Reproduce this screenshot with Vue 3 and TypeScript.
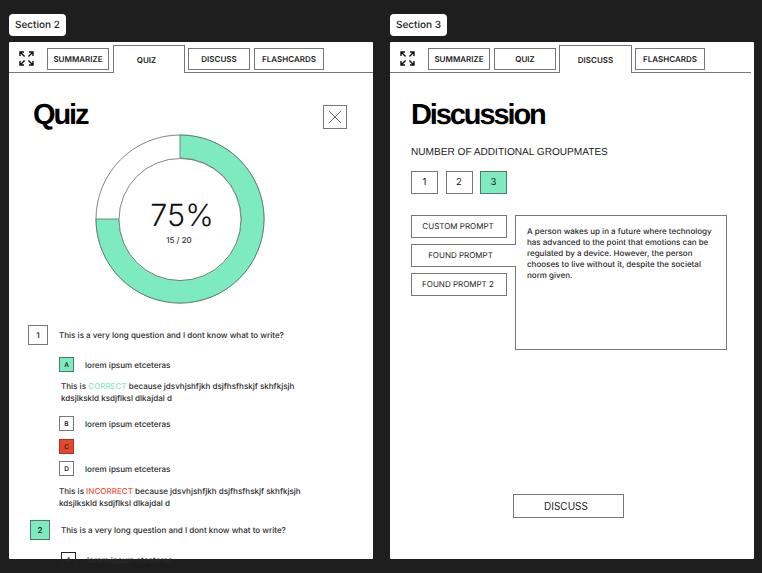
<script setup lang="ts">
const tabs = ['SUMMARIZE', 'QUIZ', 'DISCUSS', 'FLASHCARDS']
const sections = [
  { name: 'Section 2', active: 'QUIZ' },
  { name: 'Section 3', active: 'DISCUSS' },
]
const prompts = ['CUSTOM PROMPT', 'FOUND PROMPT', 'FOUND PROMPT 2']
</script>

<template>
  <div class="page">
    <section v-for="s in sections" :key="s.name" class="col">
      <div class="label">{{ s.name }}</div>
      <div class="panel">
        <header class="tabbar" :class="{ short: s.active === 'DISCUSS' }">
          <svg class="expand" width="15" height="15" viewBox="0 0 15 15" fill="none" stroke="#111" stroke-width="1.4">
            <path d="M1 5V1h4M1 1l4.6 4.6M10 1h4v4M14 1 9.4 5.6M1 10v4h4M1 14l4.6-4.6M14 10v4h-4M14 14 9.4 9.4" />
          </svg>
          <div v-for="t in tabs" :key="t" class="tab" :class="['tab-' + t.toLowerCase(), { active: t === s.active }]">{{ t }}</div>
        </header>

        <div v-if="s.active === 'QUIZ'" class="quiz-body">
          <div class="quiz-head">
            <h1 class="title">Quiz</h1>
            <button class="close" aria-label="Close">
              <svg width="14" height="14" viewBox="0 0 14 14" stroke="#444" stroke-width="0.8"><path d="M1 1l12 12M13 1 1 13" /></svg>
            </button>
          </div>
          <div class="donut">
            <svg width="170" height="170" viewBox="0 0 170 170">
              <circle cx="85" cy="85" r="84" fill="#fff" stroke="#666" stroke-width="0.8" />
              <path d="M85 1A84 84 0 1 1 1 85H24A61 61 0 1 0 85 24Z" fill="#7eeabf" stroke="#4f7a68" stroke-width="0.8" />
              <circle cx="85" cy="85.5" r="61" fill="#fff" stroke="#666" stroke-width="0.8" />
            </svg>
            <div class="score">
              <div class="pct">75%</div>
              <div class="frac">15 / 20</div>
            </div>
          </div>

          <div class="qrow first">
            <div class="qnum">1</div>
            <div>This is a very long question and I dont know what to write?</div>
          </div>
          <div class="opt a1"><span class="key green">A</span><span>lorem ipsum etceteras</span></div>
          <p class="why shift">This is <span class="ok">CORRECT</span> because jdsvhjshfjkh dsjfhsfhskjf skhfkjsjh<br />kdsjlkskld ksdjflksl dlkajdal d</p>
          <div class="opt b1"><span class="key">B</span><span>lorem ipsum etceteras</span></div>
          <div class="opt c1"><span class="key red">C</span></div>
          <div class="opt d1"><span class="key">D</span><span>lorem ipsum etceteras</span></div>
          <p class="why late">This is <span class="bad">INCORRECT</span> because jdsvhjshfjkh dsjfhsfhskjf skhfkjsjh<br />kdsjlkskld ksdjflksl dlkajdal d</p>
          <div class="qrow second">
            <div class="qnum green">2</div>
            <div>This is a very long question and I dont know what to write?</div>
          </div>
          <div class="opt a2"><span class="key">A</span><span>lorem ipsum etceteras</span></div>
        </div>

        <div v-else class="disc">
          <h1 class="title">Discussion</h1>
          <h2 class="sub">NUMBER OF ADDITIONAL GROUPMATES</h2>
          <div class="nums">
            <div class="num">1</div>
            <div class="num">2</div>
            <div class="num on">3</div>
          </div>
          <div class="prompt-area">
            <div class="prompts">
              <div v-for="(p, i) in prompts" :key="p" class="prompt" :class="{ sel: i === 1 }">{{ p }}</div>
            </div>
            <div class="prompt-box">A person wakes up in a future where technology has advanced to the point that emotions can be regulated by a device. However, the person chooses to live without it, despite the societal norm given.</div>
          </div>
          <button class="discuss-btn">DISCUSS</button>
        </div>
      </div>
    </section>
  </div>
</template>

<style>
html, body { margin: 0; background: #1e1e1e; }
</style>

<style scoped>
.page {
  display: flex;
  gap: 17px;
  width: 762px;
  height: 573px;
  box-sizing: border-box;
  padding: 14px 0 0 9px;
  overflow: hidden;
  background: #1e1e1e;
  font-family: Inter, "Liberation Sans", sans-serif;
  color: #222;
  text-rendering: geometricPrecision;
}
.col { width: 364px; display: flex; flex-direction: column; align-items: flex-start; gap: 6px; }
.label {
  height: 22px;
  line-height: 22px;
  padding: 0 6px;
  background: #fff;
  border-radius: 4px;
  font-size: 10px;
  font-weight: 500;
}
.panel { width: 364px; height: 517px; background: #fff; border-radius: 1px; }
.tabbar {
  height: 31px;
  display: flex;
  align-items: flex-start;
  border-bottom: 1px solid #777;
  box-sizing: border-box;
  padding-left: 10px;
}
.tabbar.short { margin-right: 3px; }
.expand { margin-top: 9px; margin-right: 13px; flex: none; }
.tab {
  margin-top: 6px;
  height: 22px;
  width: 62px;
  margin-right: 4px;
  box-sizing: border-box;
  border: 1px solid #777;
  font-size: 8px;
  font-weight: 600;
  display: flex;
  align-items: center;
  justify-content: center;
  background: #fff;
  flex: none;
}
.tab-flashcards { width: 70px; }
.tab.active {
  margin-top: 3px;
  height: 28px;
  width: 72px;
  margin-right: 3px;
  border-bottom: none;
}
.tab-quiz.active { padding-right: 5px; }
.tab-discuss.active { width: 73px; }
.tab-quiz:not(.active) { margin-right: 3px; }

.title {
  margin: 0;
  font-family: "Liberation Sans", sans-serif;
  font-size: 29px;
  line-height: 32px;
  font-weight: 700;
  letter-spacing: -2.1px;
  color: #000;
}
.quiz-body { padding: 26px 0 0 19px; font-size: 8.05px; font-weight: 500; color: #2a2a2a; }
.quiz-head { display: flex; justify-content: space-between; padding: 0 26px 0 5px; }
.close {
  width: 24px;
  height: 24px;
  padding: 0;
  margin-top: 6px;
  background: #fff;
  border: 1px solid #777;
  display: flex;
  align-items: center;
  justify-content: center;
}
.donut { position: relative; width: 170px; height: 170px; margin: 3px 0 0 67px; }
.donut svg { display: block; }
.score { position: absolute; inset: 0; padding-top: 6px; box-sizing: border-box; display: flex; flex-direction: column; align-items: center; justify-content: center; }
.pct { font-size: 30.5px; font-weight: 300; line-height: 36px; color: #111; margin-left: 4px; }
.frac { font-size: 8px; line-height: 12px; color: #333; margin-right: 2px; }

.qrow { display: flex; align-items: center; gap: 11px; }
.qrow.first { margin-top: 21px; }
.qrow.second { margin: 11px 0 0 2px; }
.qnum {
  width: 20px;
  height: 20px;
  box-sizing: border-box;
  border: 1px solid #777;
  display: flex;
  align-items: center;
  justify-content: center;
  font-weight: 600;
  background: #fff;
}
.opt { display: flex; align-items: center; gap: 11px; margin-left: 31px; height: 15px; }
.key {
  width: 15px;
  height: 15px;
  box-sizing: border-box;
  border: 1px solid #777;
  display: flex;
  align-items: center;
  justify-content: center;
  font-size: 6.5px;
  font-weight: 600;
  background: #fff;
}
.qnum.green, .key.green { background: #7eeabf; border-color: #4f7a68; }
.key.red { background: #e4472b; border-color: #a8361f; }
.a1 { margin-top: 12px; }
.b1 { margin-top: 12px; }
.c1 { margin-top: 8px; }
.d1 { margin-top: 7px; }
.a2 { margin: 12px 0 0 33px; }
.a2 .key { border-color: #222; background: transparent; }
.why { margin: 8px 0 0 31px; line-height: 12px; }
.why.shift { margin-left: 33px; }
.why.late { margin-top: 9px; }
.ok { color: #8ee8c6; }
.bad { color: #e8553a; }

.disc { padding: 26px 0 0 21px; display: flex; flex-direction: column; align-items: flex-start; }
.sub {
  margin: 15px 0 0;
  font-family: "Liberation Sans", sans-serif;
  font-size: 10.1px;
  line-height: 14px;
  font-weight: 400;
  color: #222;
}
.nums { display: flex; gap: 7.5px; margin-top: 11px; }
.num {
  width: 27px;
  height: 23px;
  box-sizing: border-box;
  border: 1px solid #777;
  display: flex;
  align-items: center;
  justify-content: center;
  font-size: 9.5px;
}
.num.on { background: #7eeabf; border-color: #4f7a68; }
.prompt-area { display: flex; align-items: flex-start; margin-top: 21px; }
.prompts { display: flex; flex-direction: column; gap: 6px; width: 104px; flex: none; }
.prompt {
  width: 96px;
  height: 23px;
  box-sizing: border-box;
  border: 1px solid #777;
  padding: 0 2px 2px 0;
  display: flex;
  align-items: center;
  justify-content: center;
  font-size: 8px;
  background: #fff;
}
.prompt.sel {
  width: 105px;
  padding-right: 7px;
  border-right: none;
  position: relative;
  z-index: 1;
}
.prompt-box {
  width: 212px;
  height: 135px;
  box-sizing: border-box;
  border: 1px solid #777;
  padding: 10px 11px;
  font-size: 8px;
  font-weight: 500;
  line-height: 11px;
  color: #2a2a2a;
}
.discuss-btn {
  margin: 144px 0 0 102px;
  width: 111px;
  height: 24px;
  background: #fff;
  border: 1px solid #777;
  font-family: Inter, sans-serif;
  font-size: 10px;
  color: #222;
  padding: 0 5px 0 0;
}
</style>
